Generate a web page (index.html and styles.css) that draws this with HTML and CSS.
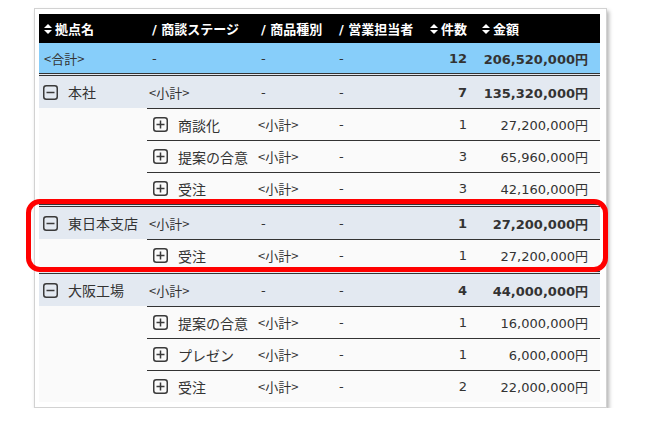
FILE: index.html
```html
<!DOCTYPE html>
<html lang="ja">
<head>
<meta charset="utf-8">
<title>集計表</title>
<link rel="stylesheet" href="styles.css">
</head>
<body>
<div class="card">
  <div class="table">
    <div class="row head">
      <div class="c"><svg class="sort" viewBox="0 0 8 10"><path d="M4 0L8 4H0Z M0 6H8L4 10Z"/></svg>拠点名</div>
      <div class="c">/ 商談ステージ</div>
      <div class="c">/ 商品種別</div>
      <div class="c">/ 営業担当者</div>
      <div class="c"><svg class="sort" viewBox="0 0 8 10"><path d="M4 0L8 4H0Z M0 6H8L4 10Z"/></svg>件数</div>
      <div class="c"><svg class="sort" viewBox="0 0 8 10"><path d="M4 0L8 4H0Z M0 6H8L4 10Z"/></svg>金額</div>
    </div>

    <div class="row total">
      <div class="c first jp">&lt;合計&gt;</div>
      <div class="c dash">-</div>
      <div class="c dash">-</div>
      <div class="c dash">-</div>
      <div class="c num b">12</div>
      <div class="c num amt b">206,520,000円</div>
    </div>

    <div class="row sub">
      <div class="c first"><svg class="tog" viewBox="0 0 15 15"><rect x="0.75" y="0.75" width="13.5" height="13.5" rx="2.5"/><path d="M3.5 7.5H11.5"/></svg><span class="label">本社</span></div>
      <div class="c jp">&lt;小計&gt;</div>
      <div class="c dash">-</div>
      <div class="c dash">-</div>
      <div class="c num b">7</div>
      <div class="c num amt b">135,320,000円</div>
    </div>
    <div class="row child">
      <div class="c"></div>
      <div class="c stage"><svg class="tog" viewBox="0 0 15 15"><rect x="0.75" y="0.75" width="13.5" height="13.5" rx="2.5"/><path d="M3.5 7.5H11.5M7.5 3.5V11.5"/></svg><span class="label">商談化</span></div>
      <div class="c jp">&lt;小計&gt;</div>
      <div class="c dash">-</div>
      <div class="c num">1</div>
      <div class="c num amt">27,200,000円</div>
    </div>
    <div class="row child">
      <div class="c"></div>
      <div class="c stage"><svg class="tog" viewBox="0 0 15 15"><rect x="0.75" y="0.75" width="13.5" height="13.5" rx="2.5"/><path d="M3.5 7.5H11.5M7.5 3.5V11.5"/></svg><span class="label">提案の合意</span></div>
      <div class="c jp">&lt;小計&gt;</div>
      <div class="c dash">-</div>
      <div class="c num">3</div>
      <div class="c num amt">65,960,000円</div>
    </div>
    <div class="row child">
      <div class="c"></div>
      <div class="c stage"><svg class="tog" viewBox="0 0 15 15"><rect x="0.75" y="0.75" width="13.5" height="13.5" rx="2.5"/><path d="M3.5 7.5H11.5M7.5 3.5V11.5"/></svg><span class="label">受注</span></div>
      <div class="c jp">&lt;小計&gt;</div>
      <div class="c dash">-</div>
      <div class="c num">3</div>
      <div class="c num amt">42,160,000円</div>
    </div>

    <div class="row sub">
      <div class="c first"><svg class="tog" viewBox="0 0 15 15"><rect x="0.75" y="0.75" width="13.5" height="13.5" rx="2.5"/><path d="M3.5 7.5H11.5"/></svg><span class="label">東日本支店</span></div>
      <div class="c jp">&lt;小計&gt;</div>
      <div class="c dash">-</div>
      <div class="c dash">-</div>
      <div class="c num b">1</div>
      <div class="c num amt b">27,200,000円</div>
    </div>
    <div class="row child">
      <div class="c"></div>
      <div class="c stage"><svg class="tog" viewBox="0 0 15 15"><rect x="0.75" y="0.75" width="13.5" height="13.5" rx="2.5"/><path d="M3.5 7.5H11.5M7.5 3.5V11.5"/></svg><span class="label">受注</span></div>
      <div class="c jp">&lt;小計&gt;</div>
      <div class="c dash">-</div>
      <div class="c num">1</div>
      <div class="c num amt">27,200,000円</div>
    </div>

    <div class="row sub">
      <div class="c first"><svg class="tog" viewBox="0 0 15 15"><rect x="0.75" y="0.75" width="13.5" height="13.5" rx="2.5"/><path d="M3.5 7.5H11.5"/></svg><span class="label">大阪工場</span></div>
      <div class="c jp">&lt;小計&gt;</div>
      <div class="c dash">-</div>
      <div class="c dash">-</div>
      <div class="c num b">4</div>
      <div class="c num amt b">44,000,000円</div>
    </div>
    <div class="row child">
      <div class="c"></div>
      <div class="c stage"><svg class="tog" viewBox="0 0 15 15"><rect x="0.75" y="0.75" width="13.5" height="13.5" rx="2.5"/><path d="M3.5 7.5H11.5M7.5 3.5V11.5"/></svg><span class="label">提案の合意</span></div>
      <div class="c jp">&lt;小計&gt;</div>
      <div class="c dash">-</div>
      <div class="c num">1</div>
      <div class="c num amt">16,000,000円</div>
    </div>
    <div class="row child">
      <div class="c"></div>
      <div class="c stage"><svg class="tog" viewBox="0 0 15 15"><rect x="0.75" y="0.75" width="13.5" height="13.5" rx="2.5"/><path d="M3.5 7.5H11.5M7.5 3.5V11.5"/></svg><span class="label">プレゼン</span></div>
      <div class="c jp">&lt;小計&gt;</div>
      <div class="c dash">-</div>
      <div class="c num">1</div>
      <div class="c num amt">6,000,000円</div>
    </div>
    <div class="row child">
      <div class="c"></div>
      <div class="c stage"><svg class="tog" viewBox="0 0 15 15"><rect x="0.75" y="0.75" width="13.5" height="13.5" rx="2.5"/><path d="M3.5 7.5H11.5M7.5 3.5V11.5"/></svg><span class="label">受注</span></div>
      <div class="c jp">&lt;小計&gt;</div>
      <div class="c dash">-</div>
      <div class="c num">2</div>
      <div class="c num amt">22,000,000円</div>
    </div>
  </div>
  <div class="mark"></div>
</div>
</body>
</html>
```
FILE: styles.css
```css
body {
  margin: 0;
  background: #fff;
  font-family: "DejaVu Sans", "Noto Sans CJK JP", sans-serif;
  font-size: 13px;
  color: #333;
}

.card {
  position: relative;
  width: 561px;
  margin: 8px 0 0 34px;
  padding: 5px 6px 5px 4px;
  border: 1px solid #d2d2d2;
  background: #fff;
  box-shadow: 2px 3px 4px rgba(0, 0, 0, 0.3);
}

.row {
  display: grid;
  grid-template-columns: 108px 109px 78px 91px 52px 123px;
}

.c {
  display: flex;
  align-items: center;
  padding-left: 2px;
  white-space: nowrap;
  min-width: 0;
}

.head {
  height: 29px;
  background: #000;
  color: #fff;
  font-weight: bold;
}

.head .c {
  padding-left: 5px;
}

.sort {
  width: 8px;
  height: 10px;
  margin-right: 3px;
  fill: #fff;
  flex: none;
}

.total {
  height: 30px;
  background: #87cefa;
}

.sub {
  height: 32px;
  background: #e3e9f1;
  border-top: 3px double #333;
}

.child {
  height: 32px;
  background: #fafafa;
}

.child .c + .c {
  border-top: 1px solid #333;
}

.first {
  padding-left: 5px;
}

.sub .first {
  padding-left: 4px;
}

.stage {
  padding-left: 6px;
}

.dash {
  padding-left: 5px;
}

.jp {
  font-family: "Noto Sans CJK JP", sans-serif;
}

.num {
  justify-content: flex-end;
  padding-right: 10px;
}

.amt {
  padding-right: 12px;
}

.b {
  font-weight: bold;
}

.label {
  font-size: 14px;
  font-family: "Noto Sans CJK JP", sans-serif;
}

.tog {
  width: 15px;
  height: 15px;
  flex: none;
  margin-right: 10px;
  fill: none;
  stroke: #3a3a3a;
  stroke-width: 1.5;
}

.mark {
  position: absolute;
  left: -9px;
  top: 190px;
  width: 582px;
  height: 73px;
  box-sizing: border-box;
  border: 5px solid #f00;
  border-radius: 14px;
}
```
